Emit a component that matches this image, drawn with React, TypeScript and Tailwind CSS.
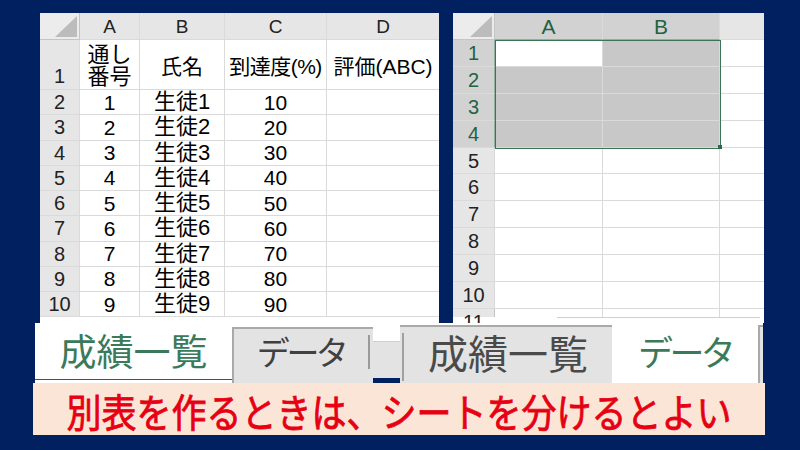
import clsx from "clsx";

const students = Array.from({ length: 10 }, (_, i) => ({
  no: i + 1,
  name: `生徒${i + 1}`,
  score: (i + 1) * 10,
}));

function Cell({ children, className }: { children?: React.ReactNode; className?: string }) {
  return (
    <div
      className={clsx(
        "flex items-center justify-center border-r border-b border-[#dadada] leading-none",
        className
      )}
    >
      {children}
    </div>
  );
}

function Corner() {
  return (
    <div className="relative bg-[#ececec] border-r border-b border-[#c4c4c4]">
      <svg className="absolute right-[2px] bottom-[2px]" width="22" height="21" viewBox="0 0 22 21">
        <polygon points="22,0 22,21 0,21" fill="#bcbcbc" />
      </svg>
    </div>
  );
}

function GradeSheet() {
  const head = "bg-[#e6e6e6] border-[#c4c4c4] text-[19px] text-[#222]";
  const rowHead = "bg-[#e6e6e6] border-[#c4c4c4] text-[20px] text-[#222]";
  return (
    <div className="w-[399px] h-[310px] bg-white overflow-hidden grid grid-cols-[40px_60px_85px_102px_112px] grid-rows-[27px_50px_repeat(9,25.25px)_1fr] text-[21px] text-black">
      <Corner />
      <Cell className={head}>A</Cell>
      <Cell className={head}>B</Cell>
      <Cell className={head}>C</Cell>
      <Cell className={clsx(head, "border-r-0")}>D</Cell>

      <Cell className={clsx(rowHead, "items-end pb-[3px]")}>1</Cell>
      <Cell className="flex-col leading-[25px] pt-[2px] text-[22px]">
        <span>通し</span>
        <span>番号</span>
      </Cell>
      <Cell className="pt-[4px]">氏名</Cell>
      <Cell className="pt-[4px] tracking-[-0.5px]">到達度(%)</Cell>
      <Cell className="pt-[4px] border-r-0">評価(ABC)</Cell>

      {students.slice(0, 9).map((s) => (
        <div key={s.no} className="contents">
          <Cell className={rowHead}>{s.no + 1}</Cell>
          <Cell>{s.no}</Cell>
          <Cell className="text-[22px]">{s.name}</Cell>
          <Cell>{s.score}</Cell>
          <Cell className="border-r-0" />
        </div>
      ))}

      <div />
      <div className="flex justify-center pt-[3px]">10</div>
      <div className="flex justify-center pt-[3px]">生徒10</div>
      <div className="flex justify-center pt-[3px]">100</div>
      <div />
    </div>
  );
}

function DataSheet() {
  const selHead = "bg-[#d2d2d2] border-[#b8b8b8] text-[#22633f]";
  const head = "bg-[#e6e6e6] border-[#c4c4c4] text-[#222]";
  return (
    <div className="relative w-[311px] h-[310px] bg-white overflow-hidden grid grid-cols-[42px_108px_117px_44px] grid-rows-[27px_repeat(10,26.9px)_8px_1fr] text-[20px]">
      <Corner />
      <Cell className={clsx(selHead, "text-[21px] border-b-[#8fb09c]")}>A</Cell>
      <Cell className={clsx(selHead, "text-[21px] border-b-[#8fb09c]")}>B</Cell>
      <Cell className={clsx(head, "border-r-0")} />

      {Array.from({ length: 10 }, (_, i) => i + 1).map((r) => {
        const sel = r <= 4;
        return (
          <div key={r} className="contents">
            <Cell className={clsx(sel ? selHead : head, sel && "border-r-[#8fb09c]")}>{r}</Cell>
            <Cell className={clsx(sel && r > 1 && "bg-[#c8c8c8] border-[#bababa]")} />
            <Cell className={clsx(sel && "bg-[#c8c8c8] border-[#bababa]")} />
            <Cell className="border-r-0" />
          </div>
        );
      })}

      <div className="bg-[#e6e6e6] border-r border-[#c4c4c4] flex justify-center pt-[3px] leading-none text-[#222]">11</div>
      <div className="border-r border-[#dadada]" />
      <div className="border-r border-[#dadada]" />
      <div />
      <div className="col-span-4 flex justify-end pr-[4px]">
        <div className="w-[203px] border-t border-[#cfcfcf]" />
      </div>

      <div className="absolute left-[42px] top-[27px] w-[226px] h-[108.6px] border border-[#3b7556] pointer-events-none" />
      <div className="absolute left-[265px] top-[132px] w-[4px] h-[4px] bg-[#2c6a48]" />
    </div>
  );
}

const tabFont = "[font-family:'Noto_Sans_CJK_JP',sans-serif] [font-feature-settings:'palt']";

function LeftTabs() {
  return (
    <div className="w-[365px] h-[60px] bg-white flex">
      <div className="w-[197px] flex flex-col pb-[4px]">
        <div className={clsx("flex-1 flex items-center justify-center text-[37px] text-[#3a7a5a]", tabFont)}>
          成績一覧
        </div>
        <div className="h-[3px] bg-[#236b43]" />
      </div>
      <div className="w-[141px] mt-[4px] bg-[#e3e3e3] border-t-2 border-l-2 border-[#a9a9a9] flex">
        <div className={clsx("flex-1 flex items-center justify-center pb-[8px] text-[33px] tracking-[-2px] text-[#404040]", tabFont)}>
          データ
        </div>
        <div className="self-center mb-[8px] w-[2px] h-[34px] bg-[#9a9a9a] mr-[3px]" />
      </div>
      <div className="w-[27px] flex flex-col">
        <div className="h-[19px] bg-white border-b border-[#cfcfcf]" />
        <div className="flex-1 bg-[#e3e3e3]" />
        <div className="h-[5px] bg-[#002060]" />
      </div>
    </div>
  );
}

function RightTabs() {
  return (
    <div className="w-[363px] h-[60px] bg-white flex pt-[2px]">
      <div className="w-[212px] bg-[#e3e3e3] border-t-2 border-[#a9a9a9] flex">
        <div className="ml-[2px] mt-[6px] mb-[2px] w-[2px] bg-[#a0a0a0]" />
        <div className={clsx("flex-1 flex items-center justify-center pb-[6px] text-[40px] text-[#4a4a4a]", tabFont)}>
          成績一覧
        </div>
      </div>
      <div className="w-[146px] flex flex-col pb-[4px]">
        <div className={clsx("flex-1 flex items-center justify-center pb-[2px] text-[35px] tracking-[-2px] text-[#3a7a5a]", tabFont)}>
          データ
        </div>
        <div className="h-[3px] bg-[#236b43]" />
      </div>
      <div className="w-[5px] bg-[#e3e3e3] border-l-2 border-t-2 border-[#a9a9a9]" />
    </div>
  );
}

export default function App() {
  return (
    <div className="w-[800px] h-[450px] bg-[#002060] overflow-hidden [font-family:'Liberation_Sans','Noto_Sans_CJK_JP',sans-serif]">
      <div className="flex pt-[13px] pl-[40px] gap-[14px]">
        <GradeSheet />
        <DataSheet />
      </div>
      <div className="flex pl-[35px]">
        <LeftTabs />
        <RightTabs />
      </div>
      <div className="ml-[33px] w-[732px] h-[52px] bg-[#fbe5d6] flex items-center justify-center">
        <span
          className={clsx(
            "inline-block scale-y-[1.12] text-[35px] leading-none text-[#e60012]",
            "[font-family:'Noto_Sans_CJK_JP',sans-serif] [-webkit-text-stroke:0.7px_#e60012]"
          )}
        >
          別表を作るときは、シートを分けるとよい
        </span>
      </div>
    </div>
  );
}
